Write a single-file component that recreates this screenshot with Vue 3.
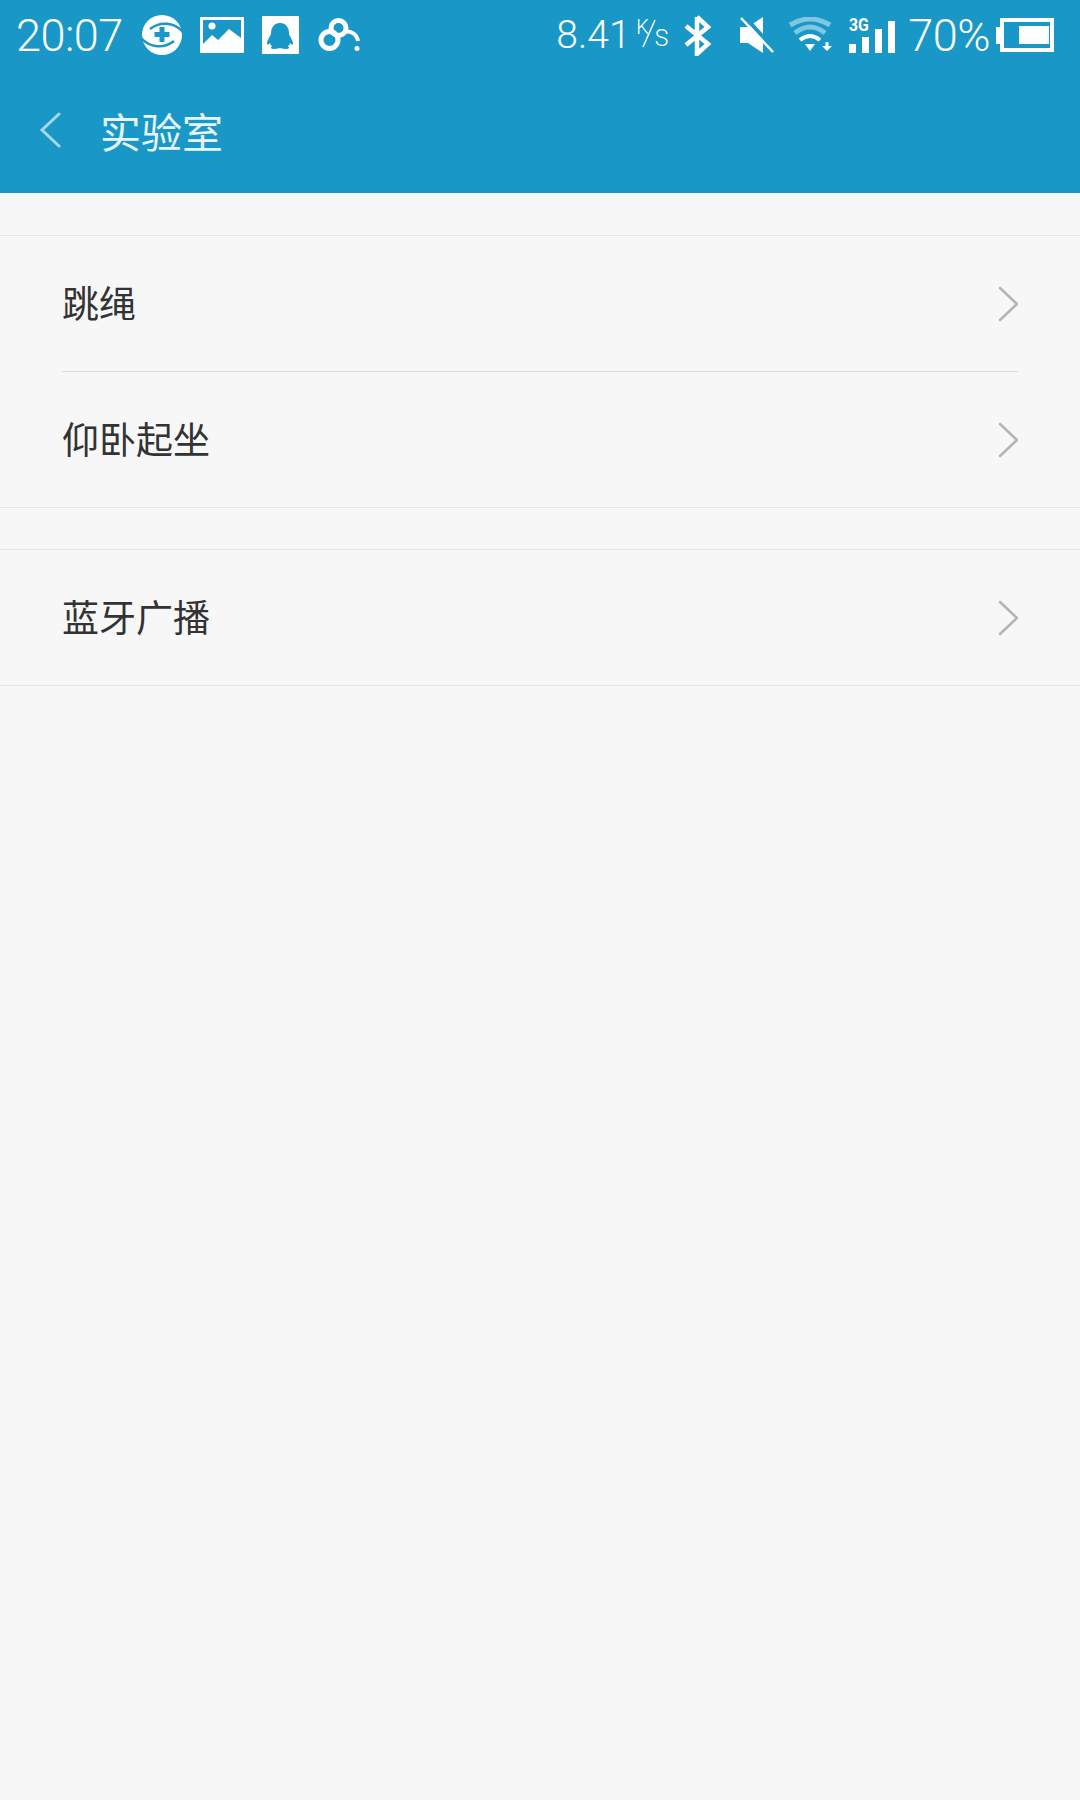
<script setup>
const groups = [["跳绳", "仰卧起坐"], ["蓝牙广播"]];
</script>

<template>
  <div class="page">
    <header class="top">
      <div class="status">
        <div class="status-left">
          <span class="time">20:07</span>
          <svg class="ic-health" width="40" height="40" viewBox="0 0 40 40">
            <circle cx="20" cy="20" r="20" fill="#fff" />
            <path d="M41 17C32 7 18 6 8 14M-1 23c9 10 23 11 33 3" stroke="#1998c7" stroke-width="2.500" fill="none" />
            <path d="M20 12v15M12.500 19.500h15" stroke="#1998c7" stroke-width="5" />
          </svg>
          <svg class="ic-image" width="44" height="36" viewBox="0 0 44 36">
            <path fill-rule="evenodd" d="M1 0h42a1 1 0 0 1 1 1v34a1 1 0 0 1-1 1H1a1 1 0 0 1-1-1V1a1 1 0 0 1 1-1zM3 3v24l9-9 6 5 11-11 12 9V3z" fill="#fff" />
            <circle cx="12" cy="9" r="3.500" fill="#fff" />
          </svg>
          <svg class="ic-qq" width="37" height="38" viewBox="0 0 37 38">
            <path fill-rule="evenodd" d="M1 0h35a1 1 0 0 1 1 1v36a1 1 0 0 1-1 1H1a1 1 0 0 1-1-1V1a1 1 0 0 1 1-1zM18 7c-6 0-9 5-9 10 0 3-3 5-4 10 0 2 1 2 3 0 .5 1.500 1 2.500 2 3.500-2 1-1 2.500 2 2.500 2 0 4-.5 6-1 2 .5 4 1 6 1 3 0 4-1.500 2-2.500 1-1 1.500-2 2-3.500 2 2 3 2 3 0-1-5-4-7-4-10 0-5-3-10-9-10z" fill="#fff" />
          </svg>
          <svg class="ic-cloud" width="43" height="34" viewBox="0 0 43 34">
            <circle cx="12.500" cy="22" r="8.500" stroke="#fff" stroke-width="5" fill="none" />
            <circle cx="21.500" cy="10" r="7.500" stroke="#fff" stroke-width="5" fill="none" />
            <path d="M27 14c6-2 13 2 14 9" stroke="#fff" stroke-width="4" fill="none" />
            <circle cx="40" cy="30.500" r="2.500" fill="#fff" />
          </svg>
        </div>
        <div class="status-right">
          <span class="speed">8.41</span>
          <span class="unit">
            <span class="k">K</span>
            <span class="s">S</span>
            <svg class="slash" width="32" height="36" viewBox="0 0 32 36">
              <path d="M19 3L7 30" stroke="#fff" stroke-width="1.500" />
            </svg>
          </span>
          <svg class="ic-bt" width="28" height="41" viewBox="0 0 28 41">
            <path d="M14 2v37l11-10L3 11M14 2l11 10L3 30" stroke="#fff" stroke-width="4.500" fill="none" />
          </svg>
          <svg class="ic-mute" width="34" height="36" viewBox="0 0 34 36">
            <path d="M0 10h8L23 0v36L8 26H0z" fill="#fff" />
            <path d="M4 -1l31 34" stroke="#1998c7" stroke-width="4" />
            <path d="M1 1l32 34" stroke="#fff" stroke-width="2.500" />
          </svg>
          <svg class="ic-wifi" width="44" height="36" viewBox="0 0 44 36">
            <path d="M2 8Q22 -4 42 8" stroke="#fff" stroke-opacity=".45" stroke-width="5" fill="none" />
            <path d="M7 16Q22 4 37 16" stroke="#fff" stroke-opacity=".45" stroke-width="5" fill="none" />
            <path d="M12 23Q22 15 32 23" stroke="#fff" stroke-width="4" fill="none" />
            <path d="M17 27h10l-5 7z" fill="#fff" />
            <path d="M39 25v5" stroke="#fff" stroke-width="3" />
            <path d="M34 29h10l-5 5z" fill="#fff" />
          </svg>
          <div class="signal">
            <span class="net">3G</span>
            <div class="bars">
              <i style="height: 9px"></i>
              <i style="height: 16px"></i>
              <i style="height: 24px"></i>
              <i style="height: 32px"></i>
            </div>
          </div>
          <span class="percent">70%</span>
          <div class="battery">
            <span class="cap"></span>
            <span class="shell"><span class="level"></span></span>
          </div>
        </div>
      </div>
      <div class="bar">
        <svg class="back" width="22" height="36" viewBox="0 0 22 36">
          <path d="M20 2L3 18l17 16" stroke="#a6d8ea" stroke-width="3" stroke-linecap="round" fill="none" />
        </svg>
        <h1>实验室</h1>
      </div>
    </header>

    <main class="content">
      <ul v-for="(rows, g) in groups" :key="g" class="group">
        <li v-for="row in rows" :key="row" class="row">
          <span class="label">{{ row }}</span>
          <svg class="chevron" width="20" height="36" viewBox="0 0 20 36">
            <path d="M2 2l17 16L2 34" stroke="#b4b4b4" stroke-width="2.500" stroke-linecap="round" fill="none" />
          </svg>
        </li>
      </ul>
    </main>
  </div>
</template>

<style>
html,
body {
  margin: 0;
  background: #f7f7f7;
}
</style>

<style scoped>
.page {
  min-height: 1800px;
  background: #f7f7f7;
  font-family: "Noto Sans CJK SC", "Noto Sans", sans-serif;
}

.top {
  height: 193px;
  background: #1998c7;
  color: #fff;
}

.status {
  height: 70px;
  display: flex;
  justify-content: space-between;
  align-items: center;
  padding: 0 26px 0 16px;
  font-family: Roboto, sans-serif;
  font-weight: 300;
}

.status-left,
.status-right {
  display: flex;
  align-items: center;
}

.time {
  font-size: 45px;
  width: 104px;
  letter-spacing: -0.5px;
}

.ic-health {
  margin-left: 22px;
}
.ic-image,
.ic-qq,
.ic-cloud {
  margin-left: 18px;
}

.speed {
  font-size: 39px;
  width: 72px;
}

.unit {
  position: relative;
  display: flex;
  justify-content: space-between;
  width: 32px;
  height: 36px;
  margin-left: 8px;
  line-height: 1;
}
.unit .k {
  font-size: 20px;
}
.unit .s {
  align-self: flex-end;
  margin-bottom: 3px;
  font-size: 23px;
}
.slash {
  position: absolute;
  left: 0;
  top: 0;
}

.ic-bt {
  margin-left: 15px;
}
.ic-mute {
  margin-left: 29px;
}
.ic-wifi {
  margin-left: 14px;
}

.signal {
  position: relative;
  width: 46px;
  height: 36px;
  margin-left: 17px;
}
.net {
  position: absolute;
  left: 0;
  top: -1px;
  font-size: 18px;
  font-weight: 700;
  line-height: 1;
  transform: scaleX(0.88);
  transform-origin: left center;
}
.bars {
  position: absolute;
  right: 0;
  bottom: 0;
  display: flex;
  align-items: flex-end;
  gap: 6px;
}
.bars i {
  display: block;
  width: 7px;
  background: #fff;
}

.percent {
  font-size: 45px;
  margin-left: 13px;
  letter-spacing: -0.5px;
}

.battery {
  display: flex;
  align-items: center;
  margin-left: 6px;
}
.cap {
  width: 4px;
  height: 17px;
  background: #fff;
}
.shell {
  display: flex;
  justify-content: flex-end;
  box-sizing: border-box;
  width: 54px;
  height: 34px;
  border: 4px solid #fff;
  padding: 4px 1px 4px 0;
}
.level {
  width: 30px;
  background: #fff;
}

.bar {
  height: 123px;
  display: flex;
  align-items: center;
  padding-left: 39px;
  padding-bottom: 4px;
  box-sizing: border-box;
}
.bar h1 {
  margin: 0 0 0 39px;
  font-size: 41px;
  font-weight: 400;
  color: #e6f5fb;
}

.content {
  padding-top: 42px;
}

.group {
  list-style: none;
  margin: 0 0 41px;
  padding: 0;
  border-top: 1px solid #e4e4e4;
  border-bottom: 1px solid #e4e4e4;
}

.row {
  height: 135px;
  margin-left: 62px;
  padding-right: 62px;
  display: flex;
  align-items: center;
  justify-content: space-between;
}
.row + .row {
  border-top: 1px solid #dcdcdc;
  margin-right: 62px;
  padding-right: 0;
}

.label {
  margin-bottom: 3px;
  font-size: 37px;
  font-weight: 400;
  color: #333;
}
</style>
